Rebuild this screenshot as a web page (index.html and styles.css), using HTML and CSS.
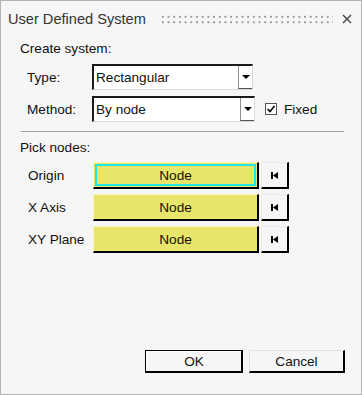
FILE: index.html
```html
<!DOCTYPE html>
<html lang="en">
<head>
    <meta charset="UTF-8">
    <meta name="viewport" content="width=device-width, initial-scale=1.0">
    <title>User Defined System</title>
    <link rel="stylesheet" href="styles.css">
</head>
<body>

<div class="window">
    <div class="titlebar">
        <span class="title">User Defined System</span>
        <span class="grip"></span>
        <svg class="close" width="10" height="10" viewBox="0 0 10 10">
            <path d="M1 1 L9 9 M9 1 L1 9" stroke="#444" stroke-width="1.4" fill="none"/>
        </svg>
    </div>

    <div class="content">
        <div class="section-label">Create system:</div>

        <div class="field-row first">
            <span class="field-label">Type:</span>
            <div class="dropdown">
                <span class="dropdown-text">Rectangular</span>
                <span class="dropdown-arrow"></span>
            </div>
        </div>
        <div class="field-row">
            <span class="field-label">Method:</span>
            <div class="dropdown wide">
                <span class="dropdown-text">By node</span>
                <span class="dropdown-arrow"></span>
            </div>
            <label class="check">
                <svg class="check-box" width="12" height="12" viewBox="0 0 12 12">
                    <rect x="0.5" y="0.5" width="11" height="11" fill="#fff" stroke="#555"/>
                    <path d="M2.5 6 L5 8.5 L9.5 3" stroke="#000" stroke-width="1.6" fill="none"/>
                </svg>
                Fixed
            </label>
        </div>

        <div class="separator"></div>

        <div class="section-label">Pick nodes:</div>

        <div class="node-row first">
            <span class="node-label">Origin</span>
            <button class="node-btn focused">Node</button>
            <button class="reset-btn"><svg width="9" height="9" viewBox="0 0 9 9"><rect x="1" y="1" width="2" height="7" fill="#000"/><path d="M8 1 L3 4.5 L8 8 Z" fill="#000"/></svg></button>
        </div>
        <div class="node-row">
            <span class="node-label">X Axis</span>
            <button class="node-btn">Node</button>
            <button class="reset-btn"><svg width="9" height="9" viewBox="0 0 9 9"><rect x="1" y="1" width="2" height="7" fill="#000"/><path d="M8 1 L3 4.5 L8 8 Z" fill="#000"/></svg></button>
        </div>
        <div class="node-row">
            <span class="node-label">XY Plane</span>
            <button class="node-btn">Node</button>
            <button class="reset-btn"><svg width="9" height="9" viewBox="0 0 9 9"><rect x="1" y="1" width="2" height="7" fill="#000"/><path d="M8 1 L3 4.5 L8 8 Z" fill="#000"/></svg></button>
        </div>
    </div>

    <div class="footer">
        <button class="dlg-btn default">OK</button>
        <button class="dlg-btn">Cancel</button>
    </div>
</div>

</body>
</html>
```

FILE: styles.css
```css
body {
    margin: 0;
    font-family: "Liberation Sans", Arial, sans-serif;
    font-size: 13.6px;
    color: #111;
    background-color: #f6f6f6;
}
.window {
    width: 362px;
    height: 395px;
    box-sizing: border-box;
    border: 1px solid #b4b4b4;
    background-color: #f6f6f6;
    display: flex;
    flex-direction: column;
}
.titlebar {
    height: 36px;
    display: flex;
    align-items: center;
    padding: 0 9px 0 7px;
}
.title {
    font-size: 14.6px;
    color: #333;
}
.grip {
    flex: 1;
    height: 11px;
    margin: 0 9px 0 14px;
    background-image: radial-gradient(#959595 1.1px, transparent 1.3px);
    background-size: 5.7px 5.5px;
    background-position: 0 0;
}
.close {
    display: block;
}
.content {
    padding: 0 17px 0 19px;
}
.section-label {
    height: 16px;
    line-height: 16px;
    margin-top: 4px;
}
.field-row {
    display: flex;
    align-items: center;
    margin-top: 6px;
    height: 26px;
}
.field-row.first {
    margin-top: 7px;
}
.field-label {
    width: 72px;
    padding-left: 7px;
    box-sizing: border-box;
}
.dropdown {
    width: 161px;
    height: 26px;
    box-sizing: border-box;
    border-top: 2px solid #1a1a1a;
    border-left: 2px solid #1a1a1a;
    border-right: 1px solid #d8d8d8;
    border-bottom: 1px solid #d8d8d8;
    background-color: #fff;
    display: flex;
    align-items: stretch;
}
.dropdown.wide {
    width: 163px;
}
.dropdown-text {
    flex: 1;
    padding-left: 2px;
    line-height: 23px;
}
.dropdown-arrow {
    width: 13px;
    border-left: 1px solid #909090;
    border-bottom: 1px solid #555;
    background-color: #fff;
    position: relative;
}
.dropdown-arrow::after {
    content: "";
    position: absolute;
    left: 3px;
    top: 9px;
    border-left: 4px solid transparent;
    border-right: 4px solid transparent;
    border-top: 4px solid #000;
}
.check {
    display: flex;
    align-items: center;
    margin-left: 10px;
    gap: 7px;
}
.check-box {
    display: block;
}
.separator {
    height: 1px;
    background-color: #a4a4a4;
    margin: 9px 0 0 1px;
}
.node-row.first {
    margin-top: 6px;
}
.separator + .section-label {
    margin-top: 8px;
}
.node-row {
    display: flex;
    align-items: center;
    margin-top: 5px;
    height: 27px;
}
.node-label {
    width: 73px;
    padding-left: 8px;
    box-sizing: border-box;
}
button {
    font-family: "Liberation Sans", Arial, sans-serif;
    font-size: 13.6px;
    color: #111;
    padding: 0;
    margin: 0;
}
.node-btn {
    width: 166px;
    height: 27px;
    box-sizing: border-box;
    background-color: #e8e66a;
    border-top: 1px solid #fbf8b4;
    border-left: 1px solid #fbf8b4;
    border-right: 2px solid #000;
    border-bottom: 2px solid #000;
}
.node-btn.focused {
    box-shadow: inset 0 0 0 1px #e8e66a, inset 0 0 0 3px #22e6e6;
}
.reset-btn {
    width: 28px;
    height: 27px;
    margin-left: 2px;
    box-sizing: border-box;
    background-color: #f6f6f6;
    border-top: 1px solid #ececec;
    border-left: 1px solid #ececec;
    border-right: 2px solid #000;
    border-bottom: 2px solid #000;
    display: flex;
    align-items: center;
    justify-content: center;
}
.footer {
    margin-top: auto;
    display: flex;
    justify-content: flex-end;
    gap: 6px;
    padding: 0 16px 21px 0;
}
.dlg-btn {
    width: 96px;
    height: 23px;
    box-sizing: border-box;
    background-color: #f6f6f6;
    border-top: 1px solid #e0e0e0;
    border-left: 1px solid #e0e0e0;
    border-right: 2px solid #000;
    border-bottom: 2px solid #000;
}
.dlg-btn.default {
    width: 98px;
    border: 1px solid #000;
    box-shadow: inset -1px -1px 0 #000, inset 1px 1px 0 #fff;
}
```
